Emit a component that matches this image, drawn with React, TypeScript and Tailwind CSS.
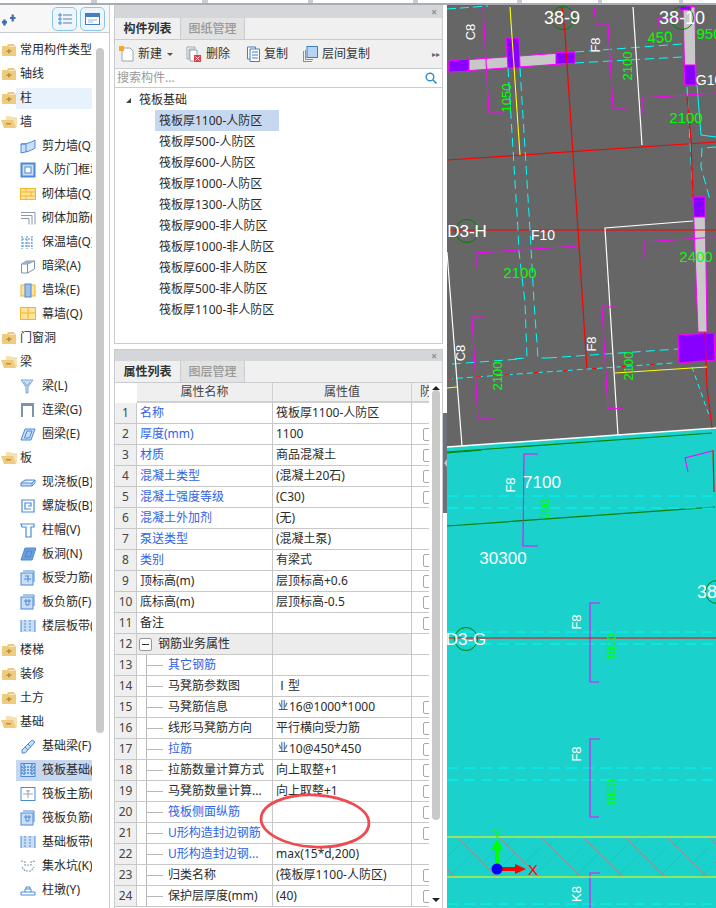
import type { ReactNode } from "react";

const Folder = ({ open }: { open?: boolean }) => (
    <svg width="16" height="14" viewBox="0 0 16 14">
        {open ? (
            <>
                <path d="M5 1h5l1 1h5v10H4z" fill="#f5e2b4" />
                <path d="M0 5h12l3 8H3z" fill="#eecb7e" />
                <rect x="5" y="8" width="5" height="1.5" fill="#b98f3a" />
            </>
        ) : (
            <>
                <path d="M1 3h5l1-2h6l1 2h1v10H1z" fill="#eecb7e" />
                <path d="M8 3h6v1H8z" fill="#f8e7bf" />
                <path d="M5.5 7.5h5v1.5h-5zM7.2 6h1.6v4.5H7.2z" fill="#b98f3a" />
            </>
        )}
    </svg>
);

const blue = "#4a8ad8";
const fillBlue = "#c9def5";

const iconPaths: Record<string, ReactNode> = {
    shear: (
        <>
            <path d="M1 6c4 0 10-1 14-4v8c-4 3-9 4-14 5z" fill={fillBlue} stroke={blue} />
            <path d="M6 6v8M1 6l5 0" stroke={blue} fill="none" />
        </>
    ),
    door: (
        <>
            <rect x="1.5" y="1.5" width="13" height="13" fill={fillBlue} stroke={blue} strokeWidth="2" />
            <rect x="5" y="5" width="6" height="6" fill="#fff" stroke={blue} />
        </>
    ),
    brick: (
        <>
            <rect x="0.5" y="2.5" width="15" height="11" fill="#ffe39b" stroke="#f5b524" />
            <path d="M1 6h14M1 10h14M6 3v3M11 6v4M6 10v3" stroke="#f5b524" />
        </>
    ),
    rebar: <path d="M1 2.5h14v12M1 5.5h11v9M1 8.5h8v6" fill="none" stroke="#8a9aa8" />,
    insulate: <path d="M2 2v13M7 2v13M12 2v13M2 5h10M2 9h10M2 12h10" fill="none" stroke={blue} strokeDasharray="2 1" />,
    hidden: (
        <>
            <path d="M1.5 6v9h6V6zM1.5 6l5-3h8l-7 3M7.5 6v9l7-4V3" fill="#fff" stroke="#7d93aa" />
            <path d="M6.5 3h8L7.5 6h-6z" fill="#8fb4dd" />
        </>
    ),
    stack: (
        <>
            <rect x="1" y="3" width="14" height="11" fill="#ffe39b" stroke="#f5b524" />
            <rect x="5" y="2" width="6" height="13" fill="#9cc0e8" stroke={blue} />
        </>
    ),
    curtain: (
        <>
            <rect x="0.5" y="1.5" width="15" height="12" fill="#ffe39b" stroke="#f5b524" />
            <path d="M8 2v11M1 7h14" stroke="#f5b524" />
        </>
    ),
    beam: <path d="M1 2h12L8 9v6H6V9zM4 4l3 4M10 4L7 8" fill={fillBlue} stroke="#7fa8d6" />,
    link: (
        <>
            <rect x="1" y="1" width="13" height="3" fill="#7d93aa" />
            <path d="M2 4v11M13 4v11" stroke="#7d93aa" strokeWidth="2" />
        </>
    ),
    ring: <path d="M5 3h10l-4 11H1zM7 5h5l-2.5 7H4.5z" fill={fillBlue} stroke={blue} />,
    slab: <path d="M1 9l4-3h10v3l-3 3H1zM1 9h11l3-3M12 9v3" fill={fillBlue} stroke={blue} />,
    spiral: <path d="M2 2h12v12H2zM11 11H5V5h6v3H8" fill="none" stroke={blue} strokeWidth="1.2" />,
    cap: <path d="M1 2h13v3h-3v10H6V5H2z" fill="#fff" stroke={blue} strokeWidth="1.2" />,
    hole: <path d="M5 2h11l-4 12H1zM7 5h5l-2 6H5z" fill="#6f9fd8" stroke={blue} />,
    force: (
        <>
            <rect x="1" y="3" width="12" height="12" fill={fillBlue} stroke={blue} />
            <path d="M3 1h11v11M4 9h7M8 6v6M5 6h4" fill="none" stroke={blue} />
        </>
    ),
    neg: (
        <>
            <rect x="1" y="3" width="12" height="12" fill={fillBlue} stroke={blue} />
            <path d="M3 1h11v11M4 7h7M6 5v6M9 5v6M6 11h3" fill="none" stroke={blue} />
        </>
    ),
    band: (
        <>
            <rect x="1" y="2" width="14" height="12" fill={fillBlue} />
            <path d="M5 2v12M10 2v12" stroke={blue} strokeDasharray="2 1" />
            <path d="M1 2v12M15 2v12" stroke={blue} />
        </>
    ),
    fbeam: <path d="M2 12L12 2l3 2L5 15H2zM5 9l3 3M8 6l3 3" fill={fillBlue} stroke={blue} />,
    raft: (
        <>
            <rect x="1" y="1.5" width="14" height="13" fill={fillBlue} stroke={blue} />
            <path d="M1 5h14M1 8h14M1 11h14" stroke={blue} strokeDasharray="2 1" strokeWidth="1.4" />
            <path d="M4 2v12M12 2v12" stroke={blue} strokeDasharray="2 1" strokeWidth="1.4" />
        </>
    ),
    main: (
        <>
            <rect x="1" y="1.5" width="14" height="13" fill="#fff" stroke={blue} />
            <path d="M3 8h10M8 4v8M6 5h4" fill="none" stroke="#9aa5af" />
        </>
    ),
    pit: <path d="M1 3l4 1v3h6V4l4-1M2 9l3 4h6l3-4" fill="none" stroke="#8a9aa8" strokeDasharray="2 1" strokeWidth="1.2" />,
    pier: <path d="M1 10h14v3H1zM5 10V7h6v3M6 7V5h4v2" fill="#fff" stroke={blue} />,
};

const Icon = ({ name }: { name: string }) => (
    <svg width="16" height="16" viewBox="0 0 16 16" className="shrink-0">
        {iconPaths[name]}
    </svg>
);

type TreeRow = { label: string; icon?: string; open?: boolean; hl?: "soft" | "strong" };

const treeRows: TreeRow[] = [
    { label: "常用构件类型" },
    { label: "轴线" },
    { label: "柱", hl: "soft" },
    { label: "墙", open: true },
    { label: "剪力墙(Q)", icon: "shear" },
    { label: "人防门框墙", icon: "door" },
    { label: "砌体墙(Q)", icon: "brick" },
    { label: "砌体加筋(", icon: "rebar" },
    { label: "保温墙(Q)", icon: "insulate" },
    { label: "暗梁(A)", icon: "hidden" },
    { label: "墙垛(E)", icon: "stack" },
    { label: "幕墙(Q)", icon: "curtain" },
    { label: "门窗洞" },
    { label: "梁", open: true },
    { label: "梁(L)", icon: "beam" },
    { label: "连梁(G)", icon: "link" },
    { label: "圈梁(E)", icon: "ring" },
    { label: "板", open: true },
    { label: "现浇板(B)", icon: "slab" },
    { label: "螺旋板(B)", icon: "spiral" },
    { label: "柱帽(V)", icon: "cap" },
    { label: "板洞(N)", icon: "hole" },
    { label: "板受力筋(", icon: "force" },
    { label: "板负筋(F)", icon: "neg" },
    { label: "楼层板带(", icon: "band" },
    { label: "楼梯" },
    { label: "装修" },
    { label: "土方" },
    { label: "基础", open: true },
    { label: "基础梁(F)", icon: "fbeam" },
    { label: "筏板基础(", icon: "raft", hl: "strong" },
    { label: "筏板主筋(", icon: "main" },
    { label: "筏板负筋(", icon: "neg" },
    { label: "基础板带(", icon: "band" },
    { label: "集水坑(K)", icon: "pit" },
    { label: "柱墩(Y)", icon: "pier" },
];

const LeftPanel = () => (
    <div className="w-[110px] shrink-0 flex flex-col border-r border-[#c8ccd0] bg-white h-full overflow-hidden">
        <div className="h-[28px] shrink-0 flex items-center border-b border-[#c8ccd0] bg-[#f7f7f7]">
            <svg width="14" height="12" viewBox="0 0 14 12" className="ml-[2px] mt-[3px]">
                <path d="M0 7h5v2.5H0zM1.2 5.5h2.5v6H1.2zM8 3h5.5v2H8zM9.6 0.5h2.2v7H9.6z" fill="#3b6fb0" />
            </svg>
            <div className="ml-[36px] w-[25px] h-[24px] rounded-[5px] border border-[#8cc4ee] bg-[#eef6fd] flex items-center justify-center">
                <svg width="14" height="14" viewBox="0 0 14 14">
                    <path d="M1 2h2v2H1zM1 6h2v2H1zM1 10h2v2H1z" fill="none" stroke={blue} />
                    <path d="M5 3h9M5 7h9M5 11h9" stroke="#5d7fa5" />
                </svg>
            </div>
            <div className="ml-[3px] w-[25px] h-[24px] rounded-[5px] border border-[#8cc4ee] bg-[#eef6fd] flex items-center justify-center">
                <svg width="15" height="14" viewBox="0 0 15 14">
                    <rect x="0.5" y="1.5" width="14" height="11" fill="#fff" stroke="#3f7fc2" />
                    <rect x="1" y="2" width="13" height="3" fill="#3f7fc2" />
                    <path d="M3 8h9M3 10h5" stroke="#9db8d6" />
                </svg>
            </div>
        </div>
        <div className="flex pt-[5px] min-h-0 grow">
            <div className="w-[92px] shrink-0">
                {treeRows.map((row) => (
                    <div key={row.label} className="h-6 flex items-center relative text-xs text-[#2b2b2b]">
                        {row.hl === "soft" && <div className="absolute left-[16px] right-0 h-[21px] bg-[#e8f2fd]" />}
                        {row.hl === "strong" && <div className="absolute left-[16px] right-0 h-[21px] bg-[#c6d7f0]" />}
                        {row.icon ? (
                            <div className="relative flex items-center pl-[20px] gap-[6px] whitespace-nowrap overflow-hidden w-full">
                                <Icon name={row.icon} />
                                <span>{row.label}</span>
                            </div>
                        ) : (
                            <div className="relative flex items-center pl-[1px] gap-[3px] whitespace-nowrap">
                                <Folder open={row.open} />
                                <span>{row.label}</span>
                            </div>
                        )}
                    </div>
                ))}
            </div>
            <div className="ml-[4px] mt-[10px] w-2 h-[685px] rounded-full bg-[#c9c9c9]" />
        </div>
    </div>
);

const PanelHeader = ({ tall }: { tall?: boolean }) => (
    <div className={`${tall ? "h-[13px]" : "h-[11px]"} shrink-0 bg-[#d4d6da] flex items-center justify-end pr-[5px]`}>
        <span className="text-[10px] leading-none text-[#8a8f96] font-bold">×</span>
    </div>
);

const Tabs = ({ first, second }: { first: string; second: string }) => (
    <div className="h-[22px] shrink-0 flex bg-[#f0f0f0] border-b border-[#c8ccd0] text-xs">
        <div className="w-[65px] flex items-center justify-center font-bold text-[#333]">{first}</div>
        <div className="w-[65px] flex items-center justify-center bg-[#e2e2e2] text-[#999] font-medium border-x border-[#c8ccd0]">
            {second}
        </div>
    </div>
);

const Toolbar = () => (
    <div className="h-[29px] shrink-0 flex items-center bg-[#f0f0f0] border-b border-[#c8ccd0] text-xs text-[#333] relative">
        <svg width="15" height="16" viewBox="0 0 15 16" className="ml-[4px]">
            <path d="M3 2h8l3 3v10H3z" fill="#fff" stroke="#9aa5af" />
            <path d="M0 0h5v5H0z" fill="#f7a823" />
        </svg>
        <span className="ml-[4px]">新建</span>
        <span className="ml-[5px] w-0 h-0 border-x-[3px] border-x-transparent border-t-[3px] border-t-[#555]" />
        <svg width="15" height="16" viewBox="0 0 15 16" className="ml-[13px]">
            <path d="M1 1h8v2H3v10H1zM4 4h7v11H4z" fill="#fff" stroke="#9aa5af" />
            <rect x="8" y="9" width="7" height="7" fill="#d9404a" />
            <path d="M9.5 10.5l4 4M13.5 10.5l-4 4" stroke="#fff" />
        </svg>
        <span className="ml-[5px]">删除</span>
        <svg width="13" height="16" viewBox="0 0 13 16" className="ml-[17px]">
            <path d="M0.5 1h8v12h-8z" fill="#fff" stroke="#3f7fc2" />
            <path d="M3 3h9.5v12.5H3z" fill="#fff" stroke="#3f7fc2" />
            <path d="M5 6h6M5 9h6M5 12h6" stroke="#3f7fc2" />
        </svg>
        <span className="ml-[4px]">复制</span>
        <svg width="15" height="16" viewBox="0 0 15 16" className="ml-[15px]">
            <path d="M0.5 5v11M0.5 15.5H9M2.5 4v9.5H10" fill="none" stroke="#e8762b" />
            <rect x="4" y="0.5" width="10.5" height="11" fill="#b9d3f2" stroke="#3f7fc2" />
        </svg>
        <span className="ml-[4px]">层间复制</span>
        <span className="absolute right-[2px] top-[10px] text-[8px] leading-none text-[#666]">▸▸</span>
    </div>
);

const components = [
    "筏板厚1100-人防区",
    "筏板厚500-人防区",
    "筏板厚600-人防区",
    "筏板厚1000-人防区",
    "筏板厚1300-人防区",
    "筏板厚900-非人防区",
    "筏板厚1000-非人防区",
    "筏板厚600-非人防区",
    "筏板厚500-非人防区",
    "筏板厚1100-非人防区",
];

const ComponentPanel = () => (
    <div className="h-[339px] shrink-0 flex flex-col border border-[#c8ccd0] border-t-0 bg-white">
        <PanelHeader tall />
        <Tabs first="构件列表" second="图纸管理" />
        <Toolbar />
        <div className="h-[19px] shrink-0 flex items-center justify-between px-[2px] border-b border-[#c8ccd0] text-xs text-[#999]">
            <span>搜索构件...</span>
            <svg width="12" height="12" viewBox="0 0 12 12" className="mr-[3px]">
                <circle cx="5" cy="5" r="3.8" fill="none" stroke="#2f8fd0" strokeWidth="1.4" />
                <path d="M8 8l3.5 3.5" stroke="#2f8fd0" strokeWidth="1.6" />
            </svg>
        </div>
        <div className="grow text-xs text-[#2b2b2b]">
            <div className="h-[22px] flex items-center pl-[11px] pt-[2px]">
                <span className="w-0 h-0 border-l-[5px] border-l-transparent border-b-[5px] border-b-[#444]" />
                <span className="ml-[8px]">筏板基础</span>
            </div>
            {components.map((c, i) => (
                <div key={c} className="h-[21px] flex pl-[40px]">
                    <div className={`w-[124px] pl-[4px] flex items-center whitespace-nowrap ${i === 0 ? "bg-[#c6d7f0]" : ""}`}>{c}</div>
                </div>
            ))}
        </div>
    </div>
);

// the grade mark in front of a rebar spec sits small and raised
const Rebar = ({ spec }: { spec: string }) => (
    <span className="flex items-center">
        <span className="text-[10px] leading-none w-[13px] text-right pr-[1px] -translate-y-[2px]">业</span>
        {spec}
    </span>
);

type Prop = {
    name: string;
    value?: ReactNode;
    link?: boolean;
    check?: boolean;
    sub?: boolean;
    group?: boolean;
};

const props: Prop[] = [
    { name: "名称", value: "筏板厚1100-人防区", link: true },
    { name: "厚度(mm)", value: "1100", link: true, check: true },
    { name: "材质", value: "商品混凝土", link: true, check: true },
    { name: "混凝土类型", value: "(混凝土20石)", link: true, check: true },
    { name: "混凝土强度等级", value: "(C30)", link: true, check: true },
    { name: "混凝土外加剂", value: "(无)", link: true },
    { name: "泵送类型", value: "(混凝土泵)", link: true },
    { name: "类别", value: "有梁式", link: true, check: true },
    { name: "顶标高(m)", value: "层顶标高+0.6", check: true },
    { name: "底标高(m)", value: "层顶标高-0.5", check: true },
    { name: "备注", check: true },
    { name: "钢筋业务属性", group: true },
    { name: "其它钢筋", link: true, sub: true },
    { name: "马凳筋参数图", value: "Ⅰ型", sub: true },
    { name: "马凳筋信息", value: <Rebar spec="16@1000*1000" />, sub: true, check: true },
    { name: "线形马凳筋方向", value: "平行横向受力筋", sub: true, check: true },
    { name: "拉筋", value: <Rebar spec="10@450*450" />, link: true, sub: true, check: true },
    { name: "拉筋数量计算方式", value: "向上取整+1", sub: true, check: true },
    { name: "马凳筋数量计算...", value: "向上取整+1", sub: true, check: true },
    { name: "筏板侧面纵筋", link: true, sub: true, check: true },
    { name: "U形构造封边钢筋", link: true, sub: true, check: true },
    { name: "U形构造封边钢...", value: "max(15*d,200)", link: true, sub: true },
    { name: "归类名称", value: "(筏板厚1100-人防区)", sub: true, check: true },
    { name: "保护层厚度(mm)", value: "(40)", sub: true, check: true },
];

const Checkbox = () => <div className="w-[12px] h-[13px] rounded-[2px] border border-[#a8a8a8] bg-white shrink-0" />;

const PropRow = ({ row, n }: { row: Prop; n: number }) => (
    <div className="h-[21px] flex border-b border-[#c8c8c8] text-xs">
        <div className="w-[22px] shrink-0 bg-[#efefef] border-r border-[#c8c8c8] flex items-center justify-center text-[#444]">{n}</div>
        <div
            className={`w-[136px] shrink-0 border-r border-[#c8c8c8] flex items-center whitespace-nowrap relative ${row.group ? "bg-[#ececec]" : ""} ${row.sub ? "pl-[31px]" : row.group ? "pl-[21px]" : "pl-[3px]"} ${row.link ? "text-[#2f62e8]" : "text-[#2b2b2b]"}`}
        >
            {row.sub && (
                <>
                    <div className="absolute left-[9px] top-0 bottom-0 w-px bg-[#b8b8b8]" />
                    <div className="absolute left-[9px] top-[10px] w-[17px] h-px bg-[#b8b8b8]" />
                </>
            )}
            {row.group && (
                <div className="absolute left-[2px] top-[4px] w-[13px] h-[13px] border border-[#999] rounded-[2px] bg-white flex items-center justify-center">
                    <div className="w-[7px] h-px bg-[#333]" />
                </div>
            )}
            {row.name}
        </div>
        <div className={`w-[139px] shrink-0 border-r border-[#c8c8c8] flex items-center pl-[3px] whitespace-pre text-[#2b2b2b] ${row.group ? "bg-[#ececec]" : ""}`}>
            {row.value}
        </div>
        <div className="grow flex items-center pl-[11px] overflow-hidden">{row.check && <Checkbox />}</div>
    </div>
);

const PropPanel = () => (
    <div className="grow min-h-0 flex flex-col border border-[#c8ccd0] border-b-0 bg-white relative overflow-hidden">
        <PanelHeader />
        <Tabs first="属性列表" second="图层管理" />
        <div className="flex grow min-h-0">
            <div className="w-[314px] shrink-0 overflow-hidden">
                <div className="h-[20px] flex text-xs text-[#444]">
                    <div className="w-[22px] shrink-0" />
                    <div className="w-[136px] shrink-0 bg-[#efefef] border-r border-b-2 border-[#d0d0d0] flex items-center justify-center">属性名称</div>
                    <div className="w-[139px] shrink-0 bg-[#efefef] border-r border-b-2 border-[#d0d0d0] flex items-center justify-center">属性值</div>
                    <div className="grow bg-[#efefef] border-b-2 border-[#d0d0d0] flex items-center pl-[8px] overflow-hidden whitespace-nowrap">防</div>
                </div>
                {props.map((row, i) => (
                    <PropRow key={i} row={row} n={i + 1} />
                ))}
            </div>
            <div className="grow flex flex-col items-center relative">
                <span className="mt-[3px] w-0 h-0 border-x-[4px] border-x-transparent border-b-[4px] border-b-[#222]" />
                <div className="w-2 h-[430px] rounded-full bg-[#c9c9c9]" />
                <span className="absolute top-[515px] w-0 h-0 border-x-[4px] border-x-transparent border-t-[4px] border-t-[#222]" />
            </div>
        </div>
        <svg width="120" height="64" viewBox="0 0 120 64" className="absolute left-[140px] top-[439px]">
            <ellipse cx="60" cy="32" rx="54" ry="26" fill="none" stroke="#ee4a50" strokeWidth="2.8" transform="rotate(3 60 32)" />
        </svg>
    </div>
);

const c = "#00ffff";
const m = "#ff00ff";
const w = "#ffffff";
const r = "#ff0000";
const y = "#ffff00";
const g = "#008000";

const lines: [string, string, number?, string?][] = [
    // slab edges and the grid on the grey part
    ["447,447 716,428", w, 1.4],
    ["447,452 712,433", g, 1.2],
    ["447,453 482,450", g, 1.2],
    ["447,526 715,507", g, 1.2],
    ["447,160 716,142", r, 1.2],
    ["562,7 565,33 578,230 587,370", r, 1.2],
    ["510,7 520,155", y, 1.1],
    ["447,230 716,230", r, 1],
    ["447,379 673,363", c, 1, "6 4"],
    ["447,379 673,363", r, 1, "5 24"],
    // cyan dashed walls
    ["508,68 518,230 519,252 525,302 527,358 510,359", c, 1, "9 5"],
    ["520,68 530,230 534,302 538,358 548,358", c, 1, "9 5"],
    ["452,364 520,359", c, 1, "9 5"],
    ["548,358 678,349", c, 1, "9 5"],
    ["447,9 488,6", c, 1, "9 4"],
    ["575,52 682,44", c, 1, "9 5"],
    ["575,63 682,57", c, 1, "9 5"],
    ["687,87 693,197", c, 1, "9 5"],
    ["697,85 701,135 716,137", c, 1],
    ["716,147 702,148 701,167 710,200", c, 1, "9 5"],
    ["692,367 710,418", c, 1, "5 4"],
    ["447,496 716,496", c, 0.9, "11 6"],
    ["447,508 716,508", c, 0.9, "11 6"],
    ["447,632 716,632", c, 0.9, "11 6"],
    ["447,644 716,644", c, 0.9, "11 6"],
    ["447,768 716,768", c, 0.9, "11 6"],
    ["447,780 716,780", c, 0.9, "11 6"],
    ["447,904 716,904", c, 0.9, "11 6"],
    // white walls
    ["633,7 642,145", w, 1.2],
    ["693,221 605,228 618,435", w, 1.2],
    ["447,252 462,446", w, 1.2],
    // magenta rebar marks
    ["483,7 489,113 503,113", m, 1.1],
    ["594,7 596,24 608,24 613,108 627,108", m, 1.1],
    ["642,113 642,98 716,93", m, 1.1],
    ["658,27 658,18 683,18", m, 1.1],
    ["476,267 476,253 578,246", m, 1.1],
    ["485,317 472,317 478,418 493,418", m, 1.1],
    ["616,307 602,307 608,409 623,408", m, 1.1],
    ["644,257 644,242 716,237", m, 1.1],
    ["688,472 685,458 712,451", m, 1.1],
    ["538,454 524,454 523,546 538,546", m, 1.1],
    ["600,603 590,603 590,682 599,682", m, 1.1],
    ["600,739 590,739 590,817 599,817", m, 1.1],
    ["600,873 590,873 590,908", m, 1.1],
    // lower right
    ["687,97 691,140 693,197", r, 1.2],
    ["705,332 707,388 712,428", r, 1.1],
    ["713,450 714,492", r, 1.2],
    ["615,373 707,367", y, 1.1],
    ["447,388 457,387", y, 1.1],
    ["447,638 716,638", r, 1.1],
    ["447,837 716,837", y, 1],
    ["447,877 716,877", y, 1],
];

const beams = [
    { points: "449,61 575,52 575,63 449,72", fill: "#c8c8c8" },
    { points: "683,7 695,7 696,85 685,85", fill: "#c8c8c8" },
    { points: "693,197 705,197 707,332 698,332", fill: "#c8c8c8" },
    { points: "449,61 469,59 469,71 449,72", fill: "#8800ff" },
    { points: "556,53 575,52 575,63 556,64", fill: "#8800ff" },
    { points: "506,38 519,38 520,68 508,68", fill: "#8800ff" },
    { points: "684,65 695,65 696,85 685,85", fill: "#8800ff" },
    { points: "680,6 691,6 691,10 680,10", fill: "#8800ff" },
    { points: "693,197 705,197 705,217 694,217", fill: "#8800ff" },
    { points: "678,335 714,333 715,360 679,363", fill: "#8800ff" },
];

type Label = { t: string; x: number; y: number; s: number; f: string; rot?: number };

const labels: Label[] = [
    { t: "38-9", x: 562, y: 18, s: 18, f: w },
    { t: "38-10", x: 682, y: 18, s: 18, f: w },
    { t: "C8", x: 470, y: 32, s: 13, f: w, rot: -90 },
    { t: "F8", x: 595, y: 45, s: 13, f: w, rot: -90 },
    { t: "450", x: 660, y: 37, s: 15, f: "#00ff00", rot: -3 },
    { t: "950", x: 709, y: 33, s: 15, f: "#00ff00" },
    { t: "2100", x: 627, y: 66, s: 13, f: "#00ff00", rot: -90 },
    { t: "1050", x: 506, y: 98, s: 13, f: "#00ff00", rot: -90 },
    { t: "G10", x: 709, y: 80, s: 14, f: w },
    { t: "2100", x: 686, y: 117, s: 15, f: "#00ff00" },
    { t: "D3-H", x: 467, y: 231, s: 17, f: w },
    { t: "F10", x: 543, y: 235, s: 14, f: w },
    { t: "2100", x: 520, y: 272, s: 15, f: "#00ff00" },
    { t: "2400", x: 696, y: 256, s: 15, f: "#00ff00" },
    { t: "C8", x: 460, y: 353, s: 13, f: w, rot: -90 },
    { t: "2100", x: 497, y: 376, s: 13, f: "#00ff00", rot: -90 },
    { t: "F8", x: 591, y: 344, s: 13, f: w, rot: -90 },
    { t: "2100", x: 628, y: 366, s: 13, f: "#00ff00", rot: -90 },
    { t: "7100", x: 542, y: 482, s: 17, f: w },
    { t: "F8", x: 510, y: 485, s: 13, f: w, rot: -90 },
    { t: "900", x: 546, y: 509, s: 12, f: "#00ff00", rot: -90 },
    { t: "30300", x: 503, y: 558, s: 17, f: w },
    { t: "38", x: 707, y: 592, s: 18, f: w },
    { t: "D3-G", x: 466, y: 639, s: 17, f: w },
    { t: "F8", x: 576, y: 622, s: 13, f: w, rot: -90 },
    { t: "1800", x: 612, y: 647, s: 12, f: "#00ff00", rot: -90 },
    { t: "F8", x: 576, y: 754, s: 13, f: w, rot: -90 },
    { t: "1800", x: 612, y: 793, s: 12, f: "#00ff00", rot: -90 },
    { t: "K8", x: 576, y: 894, s: 13, f: w, rot: -90 },
    { t: "Y", x: 497, y: 833, s: 13, f: "#00ff00" },
    { t: "X", x: 533, y: 869, s: 15, f: r },
];

const axisMarks = [
    [563, 18],
    [682, 18],
    [467, 231],
    [466, 639],
    [717, 592],
];

const CadCanvas = () => (
    <div className="grow h-full bg-[#666666] overflow-hidden">
        <svg width="269" height="903" viewBox="447 5 269 903" className="block">
            <defs>
                <pattern id="hatch" x="447" y="837" width="42" height="40" patternUnits="userSpaceOnUse">
                    <path
                        d="M10 0L42 32M0 32L8 40M26 16L2 40M18 8L26 0M36 26L42 20M0 20L10 10"
                        stroke="#c07878"
                        strokeWidth="0.7"
                        fill="none"
                    />
                </pattern>
            </defs>
            <polygon points="447,447 716,428 716,908 447,908" fill="#1ad1cc" />
            <rect x="447" y="837" width="269" height="40" fill="url(#hatch)" />
            {beams.map((b) => (
                <polygon key={b.points} points={b.points} fill={b.fill} stroke={m} strokeWidth="1" />
            ))}
            {lines.map(([points, stroke, width, dash], i) => (
                <polyline key={i} points={points} fill="none" stroke={stroke} strokeWidth={width ?? 1} strokeDasharray={dash} />
            ))}
            {axisMarks.map(([cx, cy]) => (
                <circle key={cx} cx={cx} cy={cy} r="11.5" fill="none" stroke={g} strokeWidth="1" />
            ))}
            {labels.map((l, i) => (
                <text
                    key={i}
                    x={l.x}
                    y={l.y}
                    fontSize={l.s}
                    fill={l.f}
                    textAnchor="middle"
                    dominantBaseline="central"
                    fontFamily="'Liberation Sans', sans-serif"
                    transform={l.rot ? `rotate(${l.rot} ${l.x} ${l.y})` : undefined}
                >
                    {l.t}
                </text>
            ))}
            <path d="M497 869V848" stroke="#00ff00" strokeWidth="4" />
            <path d="M491 850l6-11 6 11z" fill="#00ff00" />
            <path d="M497 869H517" stroke={r} strokeWidth="4" />
            <path d="M515 864l11 5-11 5z" fill={r} />
            <circle cx="497" cy="869" r="5.5" fill="#0000ff" />
        </svg>
    </div>
);

const TopStrip = () => (
    <div className="h-[5px] shrink-0 flex bg-white border-b-2 border-[#a9adb3]">
        <div className="w-[97px] border-r-[6px] border-[#c9ccd2]" />
        <div className="w-[111px] border-r-[6px] border-[#c9ccd2]" />
        <div className="w-[105px] border-r-[5px] border-[#c9ccd2]" />
        <div className="w-[105px] border-r-[5px] border-[#c9ccd2]" />
        <div className="w-[104px] border-r-[5px] border-[#c9ccd2]" />
        <div className="w-[80px] border-r-[4px] border-[#c9ccd2]" />
        <div className="w-[81px] border-r-[4px] border-[#c9ccd2]" />
    </div>
);

export default function App() {
    return (
        <div className="w-[716px] h-[908px] overflow-hidden flex flex-col bg-white font-['Noto_Sans','Noto_Sans_CJK_SC',sans-serif]">
            <TopStrip />
            <div className="flex grow min-h-0">
                <LeftPanel />
                <div className="w-[329px] shrink-0 ml-[4px] flex flex-col gap-[5px] h-full">
                    <ComponentPanel />
                    <PropPanel />
                </div>
                <div className="w-[4px] shrink-0 flex flex-col bg-white">
                    <div className="mt-[408px] h-[100px] bg-[#6d7179] flex items-center justify-center">
                        <span className="w-0 h-0 border-y-[4px] border-y-transparent border-r-[3px] border-r-[#c0c4ca]" />
                    </div>
                </div>
                <CadCanvas />
            </div>
        </div>
    );
}
